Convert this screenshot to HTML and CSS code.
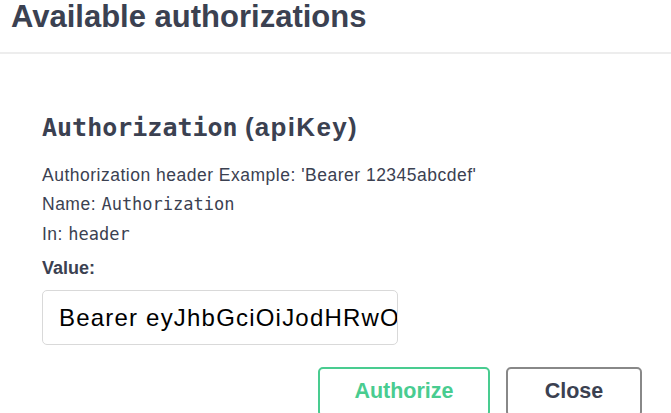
FILE: index.html
```html
<!DOCTYPE html>
<html>
<head>
<meta charset="utf-8">
<link rel="stylesheet" href="styles.css">
</head>
<body>
<div class="modal">
  <div class="modal-header">
    <h3 class="modal-title">Available authorizations</h3>
  </div>
  <div class="modal-content">
    <div class="auth-container">
      <h4 class="auth-heading"><code>Authorization</code>&nbsp;<span class="auth-type">(apiKey)</span></h4>
      <div class="auth-desc">
        <p class="line">Authorization header Example: 'Bearer 12345abcdef'</p>
        <p class="line">Name: <code>Authorization</code></p>
        <p class="line">In: <code>header</code></p>
      </div>
      <label class="value-label">Value:</label>
      <div class="input-box"><span class="input-text">Bearer eyJhbGciOiJodHRwOi8vc2NoZW1hcy54bWxzb2FwLm9yZy93cy8yMDA1</span></div>
      <div class="btn-row">
        <button class="btn authorize">Authorize</button>
        <button class="btn close">Close</button>
      </div>
    </div>
  </div>
</div>
</body>
</html>
```
FILE: styles.css
```css
html, body {
  margin: 0;
  padding: 0;
  background: #fff;
  overflow: hidden;
}
body {
  font-family: "Liberation Sans", Arial, sans-serif;
  color: #3b4151;
}
.modal-header {
  height: 52px;
  border-bottom: 2px solid #ededed;
  padding-left: 11px;
}
.modal-title {
  margin: 0;
  font-size: 31px;
  line-height: 34px;
  font-weight: 700;
  color: #3b4151;
}
.modal-content {
  padding: 0 42px;
}
.auth-heading {
  margin: 58px 0 0;
  font-size: 26px;
  line-height: 30px;
  font-weight: 700;
  color: #3b4151;
  white-space: nowrap;
}
.auth-heading code {
  font-family: "DejaVu Sans Mono", monospace;
  font-size: 25px;
  font-weight: 700;
}
.auth-type {
  letter-spacing: 1.3px;
}
.auth-desc {
  margin-top: 18px;
}
.line {
  margin: 0;
  font-size: 17.5px;
  letter-spacing: 0.5px;
  line-height: 29.3px;
  color: #3b4151;
  white-space: nowrap;
}
.line code {
  font-family: "DejaVu Sans Mono", monospace;
  font-size: 17px;
  letter-spacing: 0;
  font-weight: 400;
}
.value-label {
  display: block;
  margin-top: 7px;
  font-size: 18px;
  line-height: 24px;
  font-weight: 700;
}
.input-box {
  margin-top: 10px;
  box-sizing: border-box;
  width: 356px;
  height: 55px;
  border: 1px solid #d9d9d9;
  border-radius: 5px;
  padding: 0 2px 0 16px;
  line-height: 53px;
  color: #000;
  white-space: nowrap;
  overflow: hidden;
}
.input-text {
  font-size: 24px;
  letter-spacing: 1.2px;
}
.btn-row {
  display: flex;
  justify-content: flex-end;
  gap: 16px;
  margin-top: 22px;
  margin-right: -13px;
}
.btn {
  box-sizing: border-box;
  height: 50px;
  background: #fff;
  border: 2px solid #888;
  border-radius: 5px;
  font-family: "Liberation Sans", Arial, sans-serif;
  font-size: 21.5px;
  font-weight: 700;
  color: #3b4151;
  padding: 0;
}
.btn.authorize {
  width: 172px;
  border-color: #49cc90;
  color: #49cc90;
}
.btn.close {
  width: 136px;
}
```
